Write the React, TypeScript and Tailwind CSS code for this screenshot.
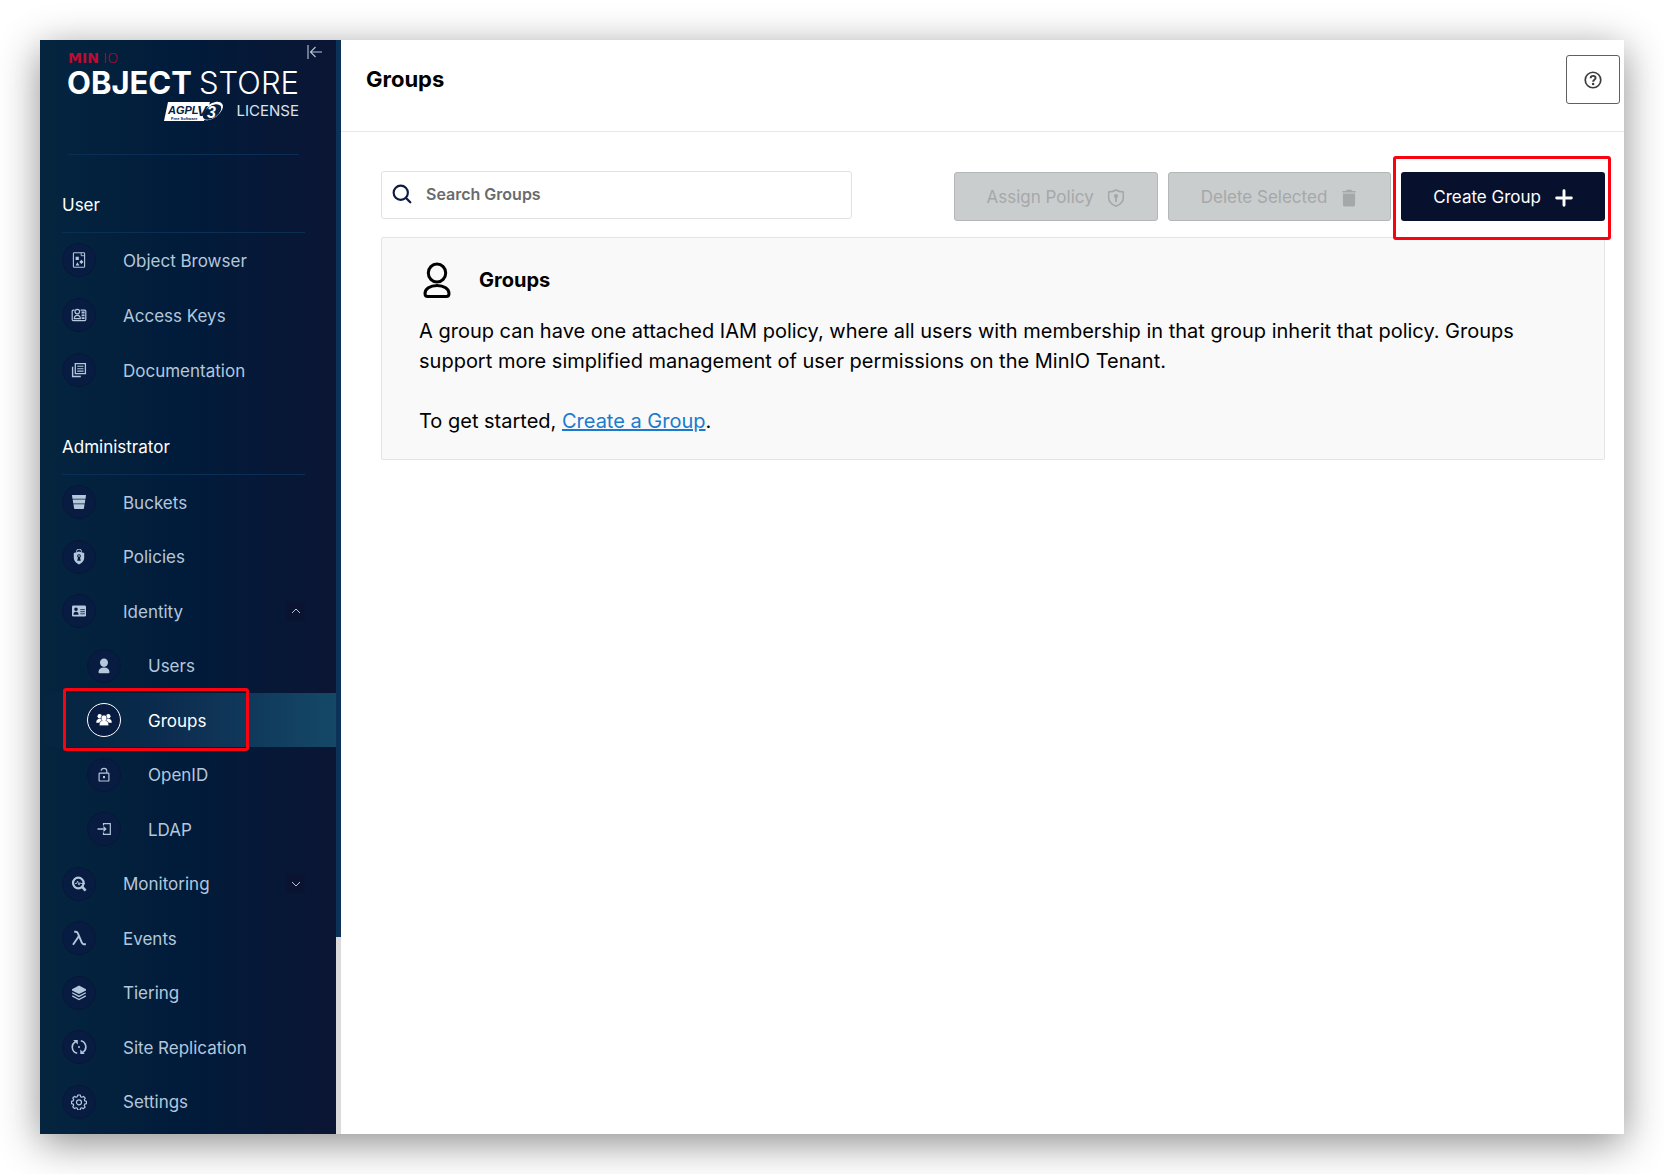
import type { ReactNode } from "react";

type IconProps = { className?: string };

function Svg({ children, size = 16, className = "" }: { children: ReactNode; size?: number; className?: string }) {
  return (
    <svg viewBox="0 0 16 16" width={size} height={size} fill="none" className={className} aria-hidden="true">
      {children}
    </svg>
  );
}

const ObjectBrowserIcon = () => (
  <Svg>
    <rect x="2.400" y=".7" width="11.200" height="14.600" rx=".8" stroke="currentColor" strokeWidth="1.100" />
    <path d="M10.200.8v2.900h3.200" stroke="currentColor" strokeWidth=".9" />
    <path d="M4.600 4.800h3.200V8H4.600zM10.400 7.800l2.100 2.100-2.100 2.100-2.100-2.100zM6.400 10.200l2 3.200H4.600z" fill="currentColor" />
  </Svg>
);

const AccessKeysIcon = () => (
  <Svg>
    <path d="M3.500 3.200H2.200a1 1 0 0 0-1 1v8.400a1 1 0 0 0 1 1h11.600a1 1 0 0 0 1-1V4.200a1 1 0 0 0-1-1H9.600" stroke="currentColor" strokeWidth="1.200" />
    <circle cx="6.300" cy="4.600" r="2.300" stroke="currentColor" strokeWidth="1.200" />
    <path d="M3.300 11.600c0-2 1.200-3.200 3-3.200s3 1.200 3 3.200z" stroke="currentColor" strokeWidth="1.200" />
    <path d="M10.600 4.600h3v2h-3zM10.600 7.500h3v1.800h-3zM10.600 10.200h3V12h-3z" fill="currentColor" />
  </Svg>
);

const DocumentationIcon = () => (
  <Svg>
    <path d="M4.300 1.600h10.100v10.100H4.300z" stroke="currentColor" strokeWidth="1.300" />
    <path d="M1.600 4.800v9.700h8.200" stroke="currentColor" strokeWidth="1.400" />
    <path d="M6.200 4.300h6.300M6.200 6.700h6.300M6.200 9.100h6.300" stroke="currentColor" strokeWidth="1.100" />
  </Svg>
);

const BucketIcon = () => (
  <Svg>
    <path d="M1 1h14l-.4 3.700H1.400zM1.700 5.500h12.600l-.5 3.900H2.200zM2.500 10.200h11l-.5 4a.9.900 0 0 1-.9.800H3.900a.9.900 0 0 1-.9-.8z" fill="currentColor" />
  </Svg>
);

const PoliciesIcon = () => (
  <Svg>
    <path d="M5.500 3.200v-.6a2.500 2.500 0 0 1 5 0v.6" stroke="currentColor" strokeWidth="1" />
    <path fillRule="evenodd" d="M8 2.400 13.200 4v5c0 3-2.200 5-5.200 6.600C5 14 2.800 12 2.800 9V4zm0 2.800a1.900 1.900 0 0 0-1 3.500l-.8 3.100h3.600L9 8.700a1.900 1.900 0 0 0-1-3.500z" fill="currentColor" />
    <path d="M7.300 6.300h1.400v1.400H7.300z" fill="currentColor" />
  </Svg>
);

const IdentityIcon = () => (
  <Svg>
    <rect x="1" y="2.600" width="14" height="11" rx="1.300" fill="currentColor" />
    <path d="M2.400 11.800c0-2 1-3 2.600-3s2.600 1 2.600 3zM5 4.500a1.700 1.700 0 1 1 0 3.600 1.700 1.700 0 0 1 0-3.600z" fill="#081c42" />
    <path d="M9.300 6.600h4.600M9.300 8.700h4.600M9.300 10.800h4.600" stroke="#081c42" strokeWidth=".8" />
  </Svg>
);

const UsersIcon = () => (
  <Svg>
    <path d="M8 .6a4 4 0 0 1 4 4.200C12 7 10.300 9 8 9S4 7 4 4.800A4 4 0 0 1 8 .6zM2.500 14c0-2.900 2-4.600 5.500-4.600s5.500 1.700 5.500 4.600a1.200 1.200 0 0 1-1.200 1.300H3.700A1.200 1.200 0 0 1 2.500 14z" fill="currentColor" />
  </Svg>
);

const GroupsIcon = () => (
  <Svg>
    <circle cx="3.700" cy="4.300" r="2.200" fill="currentColor" />
    <circle cx="12.300" cy="4.300" r="2.200" fill="currentColor" />
    <path d="M.2 10.700c0-2.700 1.400-3.900 3.500-3.900h8.600c2.100 0 3.500 1.200 3.500 3.900z" fill="currentColor" />
    <path d="M8 3a2.900 2.900 0 0 1 2.900 3c0 1-.4 1.900-1.100 2.500 1.800.5 2.900 1.800 2.900 3.900a1.200 1.200 0 0 1-1.200 1.300h-7a1.200 1.200 0 0 1-1.200-1.300c0-2.100 1.100-3.400 2.900-3.900A3.300 3.300 0 0 1 5.100 6 2.900 2.900 0 0 1 8 3z" fill="currentColor" stroke="#081c42" strokeWidth=".6" />
  </Svg>
);

const OpenIdIcon = () => (
  <Svg>
    <rect x="3.100" y="6.100" width="9.800" height="7.900" rx=".6" stroke="currentColor" strokeWidth="1.200" />
    <path d="M5.200 3.600C5.300 2.100 6.400 1.300 8 1.300c1.700 0 2.800 1 2.800 2.600v2.200" stroke="currentColor" strokeWidth="1.200" />
    <path d="M7 9h2v2.200H7z" fill="currentColor" />
  </Svg>
);

const LdapIcon = () => (
  <Svg>
    <path d="M7.500 4.500V2.600h6.800v10.800H7.500v-1.900" stroke="currentColor" strokeWidth="1.200" />
    <path d="M1.500 8h8.200M7.400 5.600 9.800 8l-2.400 2.400" stroke="currentColor" strokeWidth="1.300" />
  </Svg>
);

const MonitoringIcon = () => (
  <Svg>
    <circle cx="7.300" cy="7" r="5.300" stroke="currentColor" strokeWidth="2.200" />
    <path d="m11 10.700 3.600 4" stroke="currentColor" strokeWidth="2.600" />
    <path d="M4 7.500h1.600l1-2.400 1.400 4 1-2.500.6.900H14" stroke="currentColor" strokeWidth=".9" />
  </Svg>
);

const EventsIcon = () => (
  <Svg>
    <path d="M3.200 1.700h1.700c1 0 1.500.5 1.900 1.400l4 9.600c.4 1 1 1.500 2 1.500h2.100M7.800 6.200 2 14.700" stroke="currentColor" strokeWidth="1.900" />
  </Svg>
);

const TieringIcon = () => (
  <Svg>
    <path d="m8 .5 7 3.700v1.300L8 9 1 5.500V4.200z" fill="currentColor" />
    <path d="m1.200 7.800 6.800 3.600 6.800-3.600M1.200 10.900 8 14.600l6.800-3.700" stroke="currentColor" strokeWidth="1.300" />
  </Svg>
);

const ReplicationIcon = () => (
  <Svg>
    <path d="M6.200 14.300A6.300 6.300 0 0 1 4.600 2.600M9.800 1.700a6.300 6.300 0 0 1 1.700 11.700" stroke="currentColor" strokeWidth="1.600" />
    <path d="M2.200 1h4.600v4.600zM13.800 15H9.300v-4.600z" fill="currentColor" />
    <circle cx="8" cy="8" r="1" fill="currentColor" />
  </Svg>
);

const SettingsIcon = () => (
  <Svg>
    <path d="M6.800 1h2.400l.5 1.800 1.200.5 1.600-.9 1.700 1.700-.9 1.600.5 1.200 1.700.4v2.400l-1.800.5-.5 1.200.9 1.600-1.700 1.700-1.600-.9-1.200.5-.4 1.700H6.800l-.5-1.800-1.200-.5-1.600.9-1.700-1.700.9-1.600-.5-1.200L.5 9.700V7.300l1.700-.5.5-1.200-.9-1.600 1.700-1.700 1.600.9 1.200-.5z" stroke="currentColor" strokeWidth="1.200" strokeLinejoin="round" />
    <circle cx="8" cy="8.300" r="2.500" stroke="currentColor" strokeWidth="1.200" />
  </Svg>
);

const ShieldIcon = ({ className }: IconProps) => (
  <Svg size={18} className={className}>
    <path d="M8 .9c1.800 1.100 3.900 1.600 6.500 1.700v5.200c0 3.500-2.600 5.900-6.500 7.500-3.900-1.600-6.500-4-6.500-7.500V2.600C4.100 2.500 6.200 2 8 .9z" stroke="currentColor" strokeWidth="1.400" />
    <circle cx="8" cy="6.300" r="1.900" fill="currentColor" />
    <path d="M7.200 7h1.600v4.600H7.200z" fill="currentColor" />
  </Svg>
);

const TrashIcon = ({ className }: IconProps) => (
  <Svg size={18} className={className}>
    <path d="M5.800.7h4.400l.5 1h3.200v1.500H2.100V1.700h3.200zM2.600 4h10.800v10a1.500 1.500 0 0 1-1.500 1.500H4.100A1.500 1.500 0 0 1 2.600 14z" fill="currentColor" />
  </Svg>
);

const PlusIcon = ({ className }: IconProps) => (
  <Svg size={18} className={className}>
    <path d="M8 1.500v13M1.500 8h13" stroke="currentColor" strokeWidth="2.600" strokeLinecap="round" />
  </Svg>
);

const SearchIcon = ({ className }: IconProps) => (
  <Svg size={20} className={className}>
    <circle cx="7" cy="7" r="5.700" stroke="currentColor" strokeWidth="1.700" />
    <path d="m11.200 11.200 3.400 3.400" stroke="currentColor" strokeWidth="1.800" strokeLinecap="round" />
  </Svg>
);

const HelpIcon = () => (
  <Svg size={18}>
    <circle cx="8" cy="8" r="6.900" stroke="currentColor" strokeWidth="1.500" />
    <path d="M5.900 6.400c0-1.300.9-2.100 2.200-2.100s2.200.8 2.200 1.900c0 1.500-2.200 1.600-2.200 3.300" stroke="currentColor" strokeWidth="1.700" />
    <circle cx="8.100" cy="11.500" r="1.100" fill="currentColor" />
  </Svg>
);

const PersonOutlineIcon = () => (
  <svg viewBox="0 0 28 36" width="28" height="36" fill="none" stroke="currentColor" strokeWidth="3" aria-hidden="true">
    <ellipse cx="14" cy="11" rx="8.700" ry="9" />
    <path d="M14 23.500c7 0 12 3.500 12 8 0 2-1 3-2.800 3H4.800C3 34.500 2 33.500 2 31.500c0-4.500 5-8 12-8z" />
  </svg>
);

const CollapseIcon = () => (
  <svg viewBox="0 0 16 16" width="16" height="16" fill="none" stroke="currentColor" aria-hidden="true">
    <path d="M1 1v14M15 8H3.800M8.500 3 3.500 8l5 5" strokeWidth="1.100" />
  </svg>
);

function Logo() {
  return (
    <svg viewBox="0 0 231 72" width="231" height="72" role="img" aria-label="MinIO Object Store, AGPL v3 License">
      <g fill="#c10a33">
        <text x="0" y="13" fontFamily="DejaVu Sans" fontSize="14" fontWeight="700">MIN</text>
        <text x="35" y="13" fontFamily="DejaVu Sans" fontSize="14" fontWeight="200">IO</text>
      </g>
      <text x="-1" y="44" fill="#fff" fontFamily="Inter" fontSize="31" fontWeight="700">OBJECT</text>
      <text x="231" y="44" textAnchor="end" fill="#fff" fontFamily="Inter" fontSize="31" fontWeight="300">STORE</text>
      <path d="M100 52h42l-6 19H96z" fill="#fff" />
      <text x="100" y="64" fill="#06203f" fontFamily="Liberation Sans" fontSize="11" fontStyle="italic" fontWeight="700">AGPL</text>
      <text x="103" y="70" fill="#06203f" fontFamily="Liberation Sans" fontSize="4" fontWeight="700">Free Software</text>
      <ellipse cx="144" cy="61" rx="12.500" ry="7" transform="rotate(-36 144 61)" fill="#fff" />
      <ellipse cx="144" cy="62" rx="10.500" ry="6" transform="rotate(-36 144 62)" fill="#06203f" />
      <text x="129" y="66" fill="#06203f" fontFamily="Liberation Sans" fontSize="15" fontStyle="italic" fontWeight="700">V</text>
      <text x="139" y="68" fill="#fff" fontFamily="Liberation Sans" fontSize="16" fontStyle="italic" fontWeight="700">3</text>
      <text x="231" y="66" textAnchor="end" fill="#dbe3ee" fontFamily="Inter" fontSize="15">LICENSE</text>
    </svg>
  );
}

type Item = { label: string; icon: ReactNode; sub?: boolean; active?: boolean; toggle?: "up" | "down" };

const userItems: Item[] = [
  { label: "Object Browser", icon: <ObjectBrowserIcon /> },
  { label: "Access Keys", icon: <AccessKeysIcon /> },
  { label: "Documentation", icon: <DocumentationIcon /> },
];

const adminItems: Item[] = [
  { label: "Buckets", icon: <BucketIcon /> },
  { label: "Policies", icon: <PoliciesIcon /> },
  { label: "Identity", icon: <IdentityIcon />, toggle: "up" },
  { label: "Users", icon: <UsersIcon />, sub: true },
  { label: "Groups", icon: <GroupsIcon />, sub: true, active: true },
  { label: "OpenID", icon: <OpenIdIcon />, sub: true },
  { label: "LDAP", icon: <LdapIcon />, sub: true },
  { label: "Monitoring", icon: <MonitoringIcon />, toggle: "down" },
  { label: "Events", icon: <EventsIcon /> },
  { label: "Tiering", icon: <TieringIcon /> },
  { label: "Site Replication", icon: <ReplicationIcon /> },
  { label: "Settings", icon: <SettingsIcon /> },
];

function MenuItem({ label, icon, sub, active, toggle }: Item) {
  return (
    <li className="relative">
      <a
        href="#"
        aria-current={active ? "page" : undefined}
        className={`flex h-[54px] items-center pr-[31px] ${sub ? "pl-[47px]" : "pl-[22px]"} ${
          active ? "bg-linear-to-r from-transparent via-[#0d2f52] to-[#144867] text-white" : "text-[#b4c7dc]"
        }`}
      >
        <span
          className={`flex size-[34px] items-center justify-center rounded-full border bg-[#081c42] ${
            active ? "border-white" : "border-[#07183a]"
          }`}
        >
          {icon}
        </span>
        <span className="ml-[27px] flex-1 pt-px text-[17px] leading-6">{label}</span>
        {toggle && (
          <span className="flex size-[19px] items-center justify-center rounded-xs bg-[#0a1330]">
            <svg viewBox="0 0 10 10" width="10" height="10" fill="none" stroke="currentColor" aria-hidden="true">
              <path d={toggle === "up" ? "M1 7l4-4 4 4" : "M1 3l4 4 4-4"} />
            </svg>
          </span>
        )}
      </a>
      {active && (
        <span className="pointer-events-none absolute top-[-5px] bottom-[-4px] left-[23px] w-[186px] rounded-[3px] border-[3px] border-[#fb0210]" />
      )}
    </li>
  );
}

function SectionTitle({ children }: { children: ReactNode }) {
  return (
    <h2 className="mr-[31px] ml-[22px] border-b border-[#0b2e55] pb-[15px] text-[17px] leading-6 text-white">{children}</h2>
  );
}

function Sidebar() {
  return (
    <aside className="flex w-[301px] shrink-0">
      <nav className="relative flex min-w-0 flex-1 flex-col bg-linear-to-r from-[#05253f] via-[#011b3a] to-[#0b1534] pt-[10px] pb-[5px]">
        <button type="button" aria-label="Collapse menu" className="absolute top-1 right-[13px] text-[#b9c6d6]">
          <CollapseIcon />
        </button>
        <div className="mr-[37px] ml-7 border-b border-[#0b2e55] pb-8">
          <Logo />
        </div>
        <div className="mt-[38px]">
          <SectionTitle>User</SectionTitle>
        </div>
        <ul className="flex flex-col gap-px">
          {userItems.map((item) => (
            <MenuItem key={item.label} {...item} />
          ))}
        </ul>
        <div className="mt-[38px]">
          <SectionTitle>Administrator</SectionTitle>
        </div>
        <ul className="flex flex-1 flex-col justify-between">
          {adminItems.map((item) => (
            <MenuItem key={item.label} {...item} />
          ))}
        </ul>
      </nav>
      <div className="flex w-[5px] flex-col bg-[#dadada]">
        <div className="h-[82%] bg-[#0c3258]" />
      </div>
    </aside>
  );
}

function DisabledButton({ children }: { children: ReactNode }) {
  return (
    <button
      type="button"
      disabled
      className="flex h-[49px] items-center gap-[13px] rounded-[3px] border border-[#b4b7b8] bg-[#cacdce] px-8 pt-0.5 text-[17px] text-[#a5a8a9]"
    >
      {children}
    </button>
  );
}

export default function App() {
  return (
    <div className="flex min-h-screen bg-white p-10 font-['Inter',sans-serif] text-black">
      <div className="flex flex-1 bg-white shadow-[0_9px_38px_rgba(0,0,0,0.45)]">
        <Sidebar />
        <main className="min-w-0 flex-1">
          <header className="flex h-[92px] items-start justify-between border-b border-[#e8e8e8] pt-[15px] pr-1 pl-[25px]">
            <h1 className="text-[22px] leading-[49px] font-bold">Groups</h1>
            <button
              type="button"
              aria-label="Help"
              className="flex h-[49px] w-[54px] items-center justify-center rounded-[3px] border border-[#5e6062] text-[#3c3c3c]"
            >
              <HelpIcon />
            </button>
          </header>
          <div className="pt-[39px] pr-[19px] pl-10">
            <div className="flex items-start justify-between">
              <label className="flex h-12 w-[471px] items-center rounded-[3px] border border-[#e2e2e2] pb-0.5 pl-[10px]">
                <SearchIcon className="text-[#0b1c40]" />
                <input
                  type="text"
                  aria-label="Search Groups"
                  placeholder="Search Groups"
                  className="ml-[14px] min-w-0 flex-1 bg-transparent text-base font-semibold outline-none placeholder:text-[#6b6b6b]"
                />
              </label>
              <div className="flex gap-[10px] pt-px">
                <DisabledButton>
                  Assign Policy
                  <ShieldIcon />
                </DisabledButton>
                <DisabledButton>
                  Delete Selected
                  <TrashIcon />
                </DisabledButton>
                <div className="relative">
                  <button
                    type="button"
                    className="flex h-[49px] items-center gap-[14px] rounded-[3px] bg-[#07112e] px-8 pt-0.5 text-[17px] text-white"
                  >
                    Create Group
                    <PlusIcon />
                  </button>
                  <span className="pointer-events-none absolute -top-4 -right-[6px] -bottom-[19px] -left-2 rounded-[3px] border-[3px] border-[#fb0210]" />
                </div>
              </div>
            </div>
            <section className="mt-4 rounded-xs border border-[#e4e4e4] bg-[#f9f9f9] px-[37px] pt-6 pb-[23px]">
              <div className="flex items-center gap-7 pl-1">
                <PersonOutlineIcon />
                <h2 className="text-xl font-bold">Groups</h2>
              </div>
              <p className="mt-[18px] text-xl leading-[30px]">
                A group can have one attached IAM policy, where all users with membership in that group inherit that policy. Groups
                support more simplified management of user permissions on the MinIO Tenant.
              </p>
              <p className="mt-[30px] text-xl leading-[30px]">
                To get started,{" "}
                <a href="#" className="text-[#1a7bce] underline">
                  Create a Group
                </a>
                .
              </p>
            </section>
          </div>
        </main>
      </div>
    </div>
  );
}
